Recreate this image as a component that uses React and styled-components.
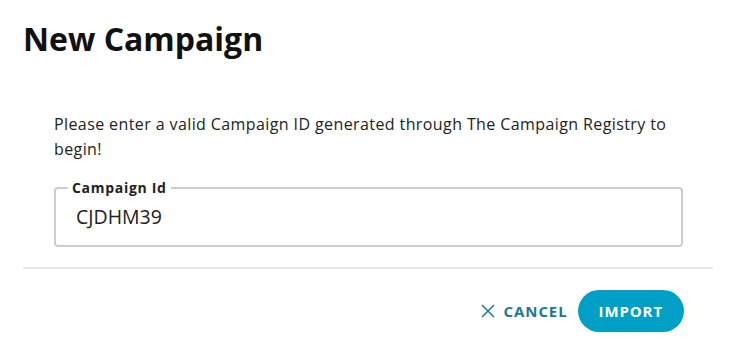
import React, { useState } from 'react';
import styled, { createGlobalStyle } from 'styled-components';

const GlobalStyle = createGlobalStyle`
  html, body {
    margin: 0;
    padding: 0;
    background: #fff;
  }
  body {
    font-family: "Open Sans", "Liberation Sans", sans-serif;
    color: #1a1a1a;
  }
`;

const Dialog = styled.div`
  width: 735px;
  height: 345px;
  box-sizing: border-box;
  padding: 20px 22px 0 23px;
  display: flex;
  flex-direction: column;
`;

const Title = styled.h2`
  margin: 0;
  font-size: 32px;
  font-weight: 700;
  line-height: 38px;
  color: #111;
`;

const Body = styled.div`
  padding: 54px 30px 20px 31px;
  border-bottom: 2px solid #e8e8e8;
`;

const Intro = styled.p`
  margin: 0 0 17px;
  font-size: 16px;
  letter-spacing: 0.4px;
  line-height: 25px;
  color: #222;
`;

const Field = styled.fieldset`
  margin: 0;
  padding: 0 20px 16px;
  border: 2px solid #cdcdcd;
  border-radius: 4px;
`;

const Legend = styled.legend`
  padding: 0 4px;
  margin-left: -8px;
  font-size: 14px;
  font-weight: 700;
  letter-spacing: 0.7px;
  line-height: 18px;
  color: #222;
`;

const Input = styled.input`
  display: block;
  width: 100%;
  margin-top: 8px;
  border: none;
  outline: none;
  padding: 0;
  font-family: inherit;
  font-size: 19.5px;
  line-height: 24px;
  color: #222;
  background: transparent;
`;

const Actions = styled.div`
  display: flex;
  justify-content: flex-end;
  align-items: center;
  gap: 10px;
  padding: 21px 29px 0 0;
`;

const TextButton = styled.button`
  display: flex;
  align-items: center;
  gap: 9px;
  border: none;
  background: none;
  padding: 0;
  font-family: inherit;
  font-size: 15px;
  font-weight: 700;
  letter-spacing: 0.9px;
  color: #1a7a95;
  cursor: pointer;
`;

const PillButton = styled.button`
  height: 42px;
  padding: 0 21px;
  border: none;
  border-radius: 21px;
  background: #00a0c6;
  color: #fff;
  font-family: inherit;
  font-size: 15px;
  font-weight: 700;
  letter-spacing: 0.9px;
  cursor: pointer;
`;

const CloseIcon = () => (
  <svg width="14" height="14" viewBox="0 0 14 14" fill="none" stroke="currentColor" strokeWidth="1.5">
    <path d="M1 1 L13 13 M13 1 L1 13" />
  </svg>
);

const App = () => {
  const [campaignId, setCampaignId] = useState('CJDHM39');

  return (
    <Dialog>
      <GlobalStyle />
      <Title>New Campaign</Title>
      <Body>
        <Intro>
          Please enter a valid Campaign ID generated through The Campaign Registry to begin!
        </Intro>
        <Field>
          <Legend>Campaign Id</Legend>
          <Input value={campaignId} onChange={(e) => setCampaignId(e.target.value)} />
        </Field>
      </Body>
      <Actions>
        <TextButton>
          <CloseIcon />
          CANCEL
        </TextButton>
        <PillButton>IMPORT</PillButton>
      </Actions>
    </Dialog>
  );
};

export default App;
